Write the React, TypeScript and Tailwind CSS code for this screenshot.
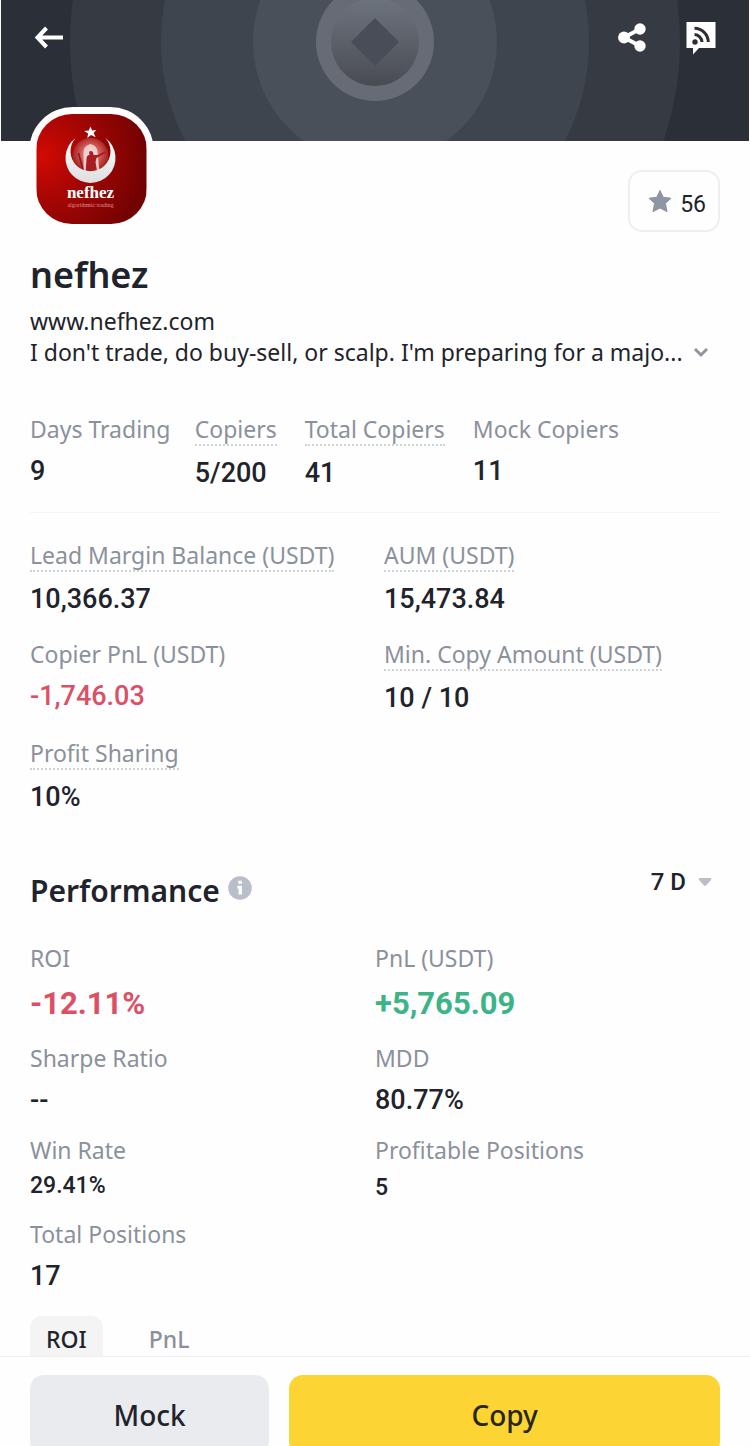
import type { ReactNode } from "react";

type Stat = { label: string; value: string; hint?: boolean; tone?: string };

const counts: Stat[] = [
  { label: "Days Trading", value: "9" },
  { label: "Copiers", value: "5/200", hint: true },
  { label: "Total Copiers", value: "41", hint: true },
  { label: "Mock Copiers", value: "11" },
];

const balances: Stat[] = [
  { label: "Lead Margin Balance (USDT)", value: "10,366.37", hint: true },
  { label: "AUM (USDT)", value: "15,473.84", hint: true },
  { label: "Copier PnL (USDT)", value: "-1,746.03", tone: "text-[#dc5066]" },
  { label: "Min. Copy Amount (USDT)", value: "10 / 10", hint: true },
  { label: "Profit Sharing", value: "10%", hint: true },
];

function Label({ hint, children }: { hint?: boolean; children: ReactNode }) {
  return (
    <dt
      className={
        hint
          ? "w-fit whitespace-nowrap border-b-2 border-dotted border-[#cfd2d6] text-[23px] leading-[30px] text-[#8b919b]"
          : "w-fit whitespace-nowrap text-[23px] leading-[30px] text-[#8b919b]"
      }
    >
      {children}
    </dt>
  );
}

function StatItem({ stat }: { stat: Stat }) {
  return (
    <div>
      <Label hint={stat.hint}>{stat.label}</Label>
      <dd className={`mt-3 font-[Roboto,sans-serif] text-[27px] leading-[30px] font-medium ${stat.tone ?? ""}`}>
        {stat.value}
      </dd>
    </div>
  );
}

function PerfItem({ label, value, style }: { label: string; value: string; style: string }) {
  return (
    <div>
      <Label>{label}</Label>
      <dd className={`font-[Roboto,sans-serif] ${style}`}>{value}</dd>
    </div>
  );
}

function HeaderArt() {
  return (
    <svg className="absolute inset-0 h-full w-full" viewBox="0 0 748 141" preserveAspectRatio="xMidYMid slice" aria-hidden="true">
      <defs>
        <linearGradient id="coin" x1="0" y1="0" x2="0" y2="1">
          <stop offset="0" stopColor="#6d737d" />
          <stop offset="0.55" stopColor="#5a5e67" />
          <stop offset="1" stopColor="#494b52" />
        </linearGradient>
      </defs>
      <rect width="748" height="141" fill="#2b2f37" />
      <circle cx="374" cy="42" r="305" fill="#363a43" />
      <circle cx="374" cy="42" r="214" fill="#3f454e" />
      <circle cx="374" cy="42" r="122" fill="#4a5059" />
      <circle cx="374" cy="42" r="59" fill="#666b75" />
      <circle cx="374" cy="42" r="44" fill="url(#coin)" />
      <path d="M374 18l24 24-24 24-24-24z" fill="#484d57" />
    </svg>
  );
}

function AvatarArt() {
  return (
    <svg className="h-full w-full" viewBox="0 0 110 110" role="img" aria-label="nefhez logo">
      <defs>
        <radialGradient id="red" cx="0.05" cy="0.38" r="0.95">
          <stop offset="0" stopColor="#d20a04" />
          <stop offset="0.4" stopColor="#a80604" />
          <stop offset="0.75" stopColor="#8a0403" />
          <stop offset="1" stopColor="#720202" />
        </radialGradient>
        <radialGradient id="glow" cx="0.5" cy="0.45" r="0.55">
          <stop offset="0" stopColor="#f3b4b0" />
          <stop offset="0.5" stopColor="#cf5a57" />
          <stop offset="1" stopColor="#9c1110" />
        </radialGradient>
        <linearGradient id="moon" x1="0" y1="0" x2="0" y2="1">
          <stop offset="0" stopColor="#ffffff" />
          <stop offset="1" stopColor="#dedede" />
        </linearGradient>
      </defs>
      <rect width="110" height="110" fill="url(#red)" />
      <circle cx="54" cy="42" r="18" fill="url(#glow)" />
      <path d="M47 58V38q0-6 7-8 7 2 7 8l2 20z" fill="#f1dedc" opacity="0.85" />
      <path d="M49 60l1-15q0-4 3-4-1-4 1-4 3 0 3 4l4 0 8-4 0 2-9 5-1 4 2 12z" fill="#a81d22" />
      <path d="M42 39l5 19" stroke="#8c1518" strokeWidth="1.500" />
      <path d="M39 24A25 25 0 1 0 69 24A20 20 0 1 1 39 24z" fill="url(#moon)" />
      <path d="M54 12.500l1.600 4 4.200-.5-2.700 3 2 4.200-4.600-2.200-3.700 3 .8-4.600-4-2.400 4.700-.6z" fill="#fff" />
      <text x="54" y="84" textAnchor="middle" fill="#fff" fontSize="17" fontWeight="700" fontFamily="Liberation Serif, serif">
        nefhez
      </text>
      <text x="54" y="93" textAnchor="middle" fill="#e0918f" fontSize="6" fontFamily="Liberation Serif, serif">
        algorithmic trading
      </text>
    </svg>
  );
}

export default function App() {
  return (
    <div className="flex h-screen flex-col bg-[#fefefe] font-['Noto_Sans',sans-serif] text-[#1f242c]">
      <div className="min-h-0 flex-1 overflow-hidden">
        <header className="relative mx-px h-[141px]">
          <HeaderArt />
          <div className="relative flex items-center justify-between pt-[18px] pr-[33px] pl-[33px]">
            <button type="button" aria-label="Back" className="text-white">
              <svg className="h-10 w-[30px]" viewBox="0 0 30 40" fill="none" stroke="currentColor" strokeWidth="4">
                <path d="M29 19.500H4M12.500 10L3.500 19.500l9 9.500" />
              </svg>
            </button>
            <div className="flex items-center gap-10">
              <button type="button" aria-label="Share" className="text-white">
                <svg className="h-10 w-7" viewBox="0 0 28 40" fill="currentColor">
                  <path d="M22 11L6 19.500l16 8.500" fill="none" stroke="currentColor" strokeWidth="4" />
                  <circle cx="22" cy="11" r="5.700" />
                  <circle cx="6" cy="19.500" r="5.900" />
                  <circle cx="22" cy="28" r="5.700" />
                </svg>
              </button>
              <button type="button" aria-label="Feed" className="text-white">
                <svg className="h-10 w-[30px]" viewBox="0 0 30 40">
                  <path d="M.500 4H29.500V30H13L7 36.500V30H.500z" fill="currentColor" />
                  <circle cx="9" cy="24" r="2.700" fill="#2b2f37" />
                  <path d="M8.500 16.500a8 8 0 0 1 7.500 7.500M8.500 10.300a14 14 0 0 1 13.800 13.700" fill="none" stroke="#2b2f37" strokeWidth="3" />
                </svg>
              </button>
            </div>
          </div>
        </header>

        <main className="px-[30px]">
          <div className="relative -mt-[34px] flex items-start justify-between">
            <div className="-ml-px h-[124px] w-[125px] rounded-[44px] bg-[#fefefe] p-[7px]">
              <div className="h-[110px] overflow-hidden rounded-[36px]">
                <AvatarArt />
              </div>
            </div>
            <button
              type="button"
              aria-label="56 favourites"
              className="mt-[63px] flex h-[62px] items-center gap-2 rounded-[14px] border-2 border-[#eeeff1] pr-3 pl-[18px] font-[Roboto,sans-serif] text-[23px]"
            >
              <svg className="h-6 w-6" viewBox="0 0 24 24" fill="#8f96a3">
                <path d="M12 1.500l3.300 6.800 7.700.9-5.500 5.300 1.500 8.200L12 19l-7 3.700 1.500-8.200L1 9.200l7.700-.9z" stroke="#8f96a3" strokeLinejoin="round" />
              </svg>
              <span className="pt-2">56</span>
            </button>
          </div>

          <h1 className="mt-5 text-[36px] leading-[46px] font-semibold">nefhez</h1>
          <a href="https://www.nefhez.com" className="mt-2 block w-fit text-[23px] leading-[31px]">
            www.nefhez.com
          </a>
          <div className="flex items-center justify-between pr-[11px]">
            <p className="truncate text-[23px] leading-[31px]">I don't trade, do buy-sell, or scalp. I'm preparing for a majo...</p>
            <button type="button" aria-label="Show more">
              <svg className="h-4 w-4" viewBox="0 0 16 16" fill="none" stroke="#8f949d" strokeWidth="3">
                <path d="M2 4l6 6 6-6" />
              </svg>
            </button>
          </div>

          <dl className="mt-[46px] grid grid-cols-[24fr_16fr_24.500fr_36fr]">
            {counts.map((s) => (
              <StatItem key={s.label} stat={s} />
            ))}
          </dl>

          <hr className="mt-6 border-[#f3f4f5]" />

          <dl className="mt-[27px] grid grid-cols-2 gap-x-[18px] gap-y-[25px]">
            {balances.map((s) => (
              <StatItem key={s.label} stat={s} />
            ))}
          </dl>

          <div className="mt-[50px] flex items-start justify-between pr-2">
            <div className="flex items-start gap-2">
              <h2 className="pt-[9px] text-[30px] leading-[40px] font-semibold">Performance</h2>
              <button type="button" aria-label="About performance" className="mt-[14px]">
                <svg className="h-6 w-6" viewBox="0 0 24 24">
                  <circle cx="12" cy="12" r="11.800" fill="#b9bec8" />
                  <path d="M10.300 4.800h3.600v3h-3.600zM9.300 9.800h4.600v8.700h-3.300v-6H9.300z" fill="#fff" />
                </svg>
              </button>
            </div>
            <button type="button" className="flex items-center gap-3 font-[Roboto,sans-serif] text-[24px] leading-[40px] font-medium">
              7 D
              <svg className="h-[10px] w-[14px]" viewBox="0 0 14 10" fill="#b9bec8">
                <path d="M1.500 1h11q1.500.5.500 2L8 8.500q-1 .8-2 0L1 3Q0 1.500 1.500 1z" />
              </svg>
            </button>
          </div>

          <dl className="mt-8 grid grid-cols-2 gap-y-5">
            <PerfItem label="ROI" value="-12.11%" style="mt-3 text-[31px] leading-[38px] font-bold text-[#dc5066]" />
            <PerfItem label="PnL (USDT)" value="+5,765.09" style="mt-3 text-[31px] leading-[38px] font-bold text-[#3cb488]" />
            <PerfItem label="Sharpe Ratio" value="--" style="mt-3 text-[27px] leading-[30px] font-medium" />
            <PerfItem label="MDD" value="80.77%" style="mt-3 text-[27px] leading-[30px] font-medium" />
            <PerfItem label="Win Rate" value="29.41%" style="mt-[10px] text-[23px] leading-[22px] font-medium" />
            <PerfItem label="Profitable Positions" value="5" style="mt-3 text-[23px] leading-[22px] font-medium" />
            <PerfItem label="Total Positions" value="17" style="mt-3 text-[27px] leading-[30px] font-medium" />
          </dl>

          <div role="tablist" className="mt-[25px] flex gap-[30px] text-[23px] leading-[30px] font-medium">
            <button type="button" role="tab" aria-selected="true" className="rounded-xl bg-[#f4f4f4] px-4 pt-2 pb-3">
              ROI
            </button>
            <button type="button" role="tab" aria-selected="false" className="px-4 pt-2 pb-3 text-[#8b919b]">
              PnL
            </button>
          </div>
        </main>
      </div>

      <footer className="flex h-[90px] shrink-0 items-start gap-5 overflow-hidden border-t border-[#eeeff0] px-[30px] pt-[18px] text-[28px] font-medium">
        <button type="button" className="h-20 flex-[5] rounded-[14px] bg-[#eaebef]">
          Mock
        </button>
        <button type="button" className="h-20 flex-[9] rounded-[14px] bg-[#fcd434] text-[#29260f]">
          Copy
        </button>
      </footer>
    </div>
  );
}
